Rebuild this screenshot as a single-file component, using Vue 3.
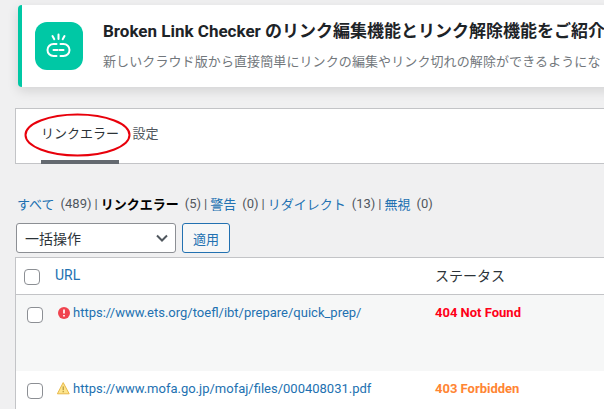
<script setup>
const filtres = [
  { nom: 'すべて', total: 489 },
  { nom: 'リンクエラー', total: 5, actif: true },
  { nom: '警告', total: 0 },
  { nom: 'リダイレクト', total: 13 },
  { nom: '無視', total: 0 }
];
const lignes = [
  { url: 'https://www.ets.org/toefl/ibt/prepare/quick_prep/', statut: '404 Not Found', type: 'erreur' },
  { url: 'https://www.mofa.go.jp/mofaj/files/000408031.pdf', statut: '403 Forbidden', type: 'alerte' }
];
</script>

<template>
  <div class="page">
    <div class="banniere">
      <div class="logo">
        <svg width="26" height="26" viewBox="0 0 26 26" fill="none" stroke="#fff" stroke-width="2" stroke-linecap="round">
          <path d="M10.5 11H7.5a6 6 0 0 0 0 12h3" />
          <path d="M14.5 11h3a6 6 0 0 1 0 12h-3" />
          <path d="M7.5 17h4M13.5 17h4" />
          <path d="M12.5 1.5v4.5M6.5 3l1.8 3.2M18.5 3l-1.8 3.2" />
        </svg>
      </div>
      <div class="banniere-texte">
        <div class="titre">Broken Link Checker のリンク編集機能とリンク解除機能をご紹介</div>
        <div class="sous-titre">新しいクラウド版から直接簡単にリンクの編集やリンク切れの解除ができるようにな</div>
      </div>
    </div>

    <div class="onglets">
      <div class="onglet actif">リンクエラー</div>
      <div class="onglet second">設定</div>
      <svg class="ellipse" width="109" height="46" viewBox="0 0 109 46">
        <ellipse cx="54.5" cy="23" rx="52" ry="20.5" fill="none" stroke="#e8000b" stroke-width="2" />
      </svg>
    </div>

    <div class="filtres">
      <template v-for="(f, i) in filtres" :key="f.nom">
        <span v-if="i > 0" class="sep">|</span>
        <span :class="f.actif ? 'filtre-actif' : 'filtre'">{{ f.nom }}</span>
        <span class="total">({{ f.total }})</span>
      </template>
    </div>

    <div class="actions">
      <div class="select">
        <span>一括操作</span>
        <svg width="14" height="14" viewBox="0 0 14 14" fill="none" stroke="#50575e" stroke-width="2">
          <path d="M2 4.5l5 5 5-5" />
        </svg>
      </div>
      <button class="bouton">適用</button>
    </div>

    <div class="tableau">
      <div class="entete">
        <span class="case"></span>
        <span class="col-url lien-entete">URL</span>
        <span class="col-statut">ステータス</span>
      </div>
      <div v-for="l in lignes" :key="l.url" class="ligne" :class="l.type">
        <span class="case"></span>
        <div class="col-url url">
          <svg v-if="l.type === 'erreur'" width="13" height="13" viewBox="0 0 13 13">
            <circle cx="7" cy="7" r="6" fill="#f0444f" />
            <path d="M7 3.4v4.2M7 8.9v1.5" stroke="#fff" stroke-width="1.7" />
          </svg>
          <svg v-else width="13" height="13" viewBox="0 0 13 13">
            <path d="M6.2 .6L12.2 11.8H.4z" fill="#fde58c" stroke="#e8b84a" stroke-width="1" stroke-linejoin="round" />
            <path d="M6.2 4.4v3.8M6.2 9v1.3" stroke="#a8862a" stroke-width="1" />
          </svg>
          <a>{{ l.url }}</a>
        </div>
        <span class="col-statut code">{{ l.statut }}</span>
      </div>
    </div>
  </div>
</template>

<style>
html, body {
  margin: 0;
  background: #f0f0f1;
  overflow: hidden;
}
</style>

<style scoped>
.page {
  width: 604px;
  height: 409px;
  overflow: hidden;
  padding: 5px 0 0 15px;
  box-sizing: border-box;
  font-family: Roboto, "Noto Sans CJK JP", sans-serif;
  font-size: 13px;
  color: #2c3338;
}

.banniere {
  display: flex;
  align-items: center;
  width: 700px;
  height: 82px;
  margin-left: 3px;
  box-sizing: border-box;
  padding-left: 13px;
  background: #fff;
  border-left: 4px solid #00c8a5;
  border-radius: 4px;
  box-shadow: 0 4px 12px rgba(0, 0, 0, 0.12);
}

.logo {
  display: flex;
  align-items: center;
  justify-content: center;
  flex: none;
  width: 48px;
  height: 48px;
  background: #00c8a5;
  border-radius: 12px;
}

.banniere-texte {
  margin-left: 20px;
  white-space: nowrap;
}

.titre {
  font-size: 17px;
  font-weight: 700;
  line-height: 22px;
  color: #1d2327;
}

.sous-titre {
  margin-top: 10px;
  font-size: 13px;
  letter-spacing: 0.1px;
  line-height: 20px;
  color: #72777c;
}

.onglets {
  position: relative;
  display: flex;
  gap: 13.5px;
  width: 700px;
  height: 56px;
  margin-top: 21px;
  padding-left: 25px;
  box-sizing: border-box;
  background: #fff;
  border: 1px solid #c3c4c7;
}

.onglet {
  height: 55px;
  box-sizing: border-box;
  padding-top: 15px;
  line-height: 20px;
}

.onglet.second {
  color: #50575e;
}

.onglet.actif {
  border-bottom: 4px solid #646970;
}

.ellipse {
  position: absolute;
  left: 7px;
  top: 3px;
}

.filtres {
  display: flex;
  align-items: center;
  height: 20px;
  margin: 29px 0 0 2px;
  white-space: nowrap;
  color: #2271b1;
}

.filtre-actif {
  font-weight: 700;
  color: #000;
}

.total {
  margin-left: 6px;
  color: #50575e;
}

.sep {
  margin: 0 3px;
  color: #50575e;
}

.actions {
  display: flex;
  gap: 6px;
  margin: 10px 0 0 1px;
}

.select {
  display: flex;
  align-items: center;
  justify-content: space-between;
  width: 160px;
  height: 30px;
  box-sizing: border-box;
  padding: 0 6px 0 8px;
  font-size: 14px;
  background: #fff;
  border: 1px solid #8c8f94;
  border-radius: 3px;
}

.bouton {
  width: 48px;
  height: 30px;
  padding: 0;
  font: inherit;
  color: #2271b1;
  background: #f6f7f7;
  border: 1px solid #2271b1;
  border-radius: 3px;
}

.tableau {
  width: 700px;
  margin-top: 4px;
  background: #fff;
  border: 1px solid #c3c4c7;
}

.entete {
  display: flex;
  align-items: center;
  height: 36px;
  font-size: 14px;
  border-bottom: 1px solid #c3c4c7;
}

.ligne {
  display: flex;
  align-items: flex-start;
  padding-top: 10px;
  box-sizing: border-box;
}

.ligne.erreur {
  height: 76px;
  background: #f6f7f7;
}

.ligne.alerte {
  height: 60px;
}

.case {
  flex: none;
  width: 16px;
  height: 16px;
  box-sizing: border-box;
  margin: 2px 0 0 11px;
  background: #fff;
  border: 1px solid #8c8f94;
  border-radius: 4px;
}

.entete .case {
  margin: 2px 0 0 8px;
}

.col-url {
  flex: none;
  width: 378px;
  margin-left: 14px;
}

.entete .col-url {
  width: 380px;
  margin: -2px 0 0 15px;
}

.entete .col-statut {
  margin-top: -2px;
}

.lien-entete {
  color: #2271b1;
}

.url {
  display: flex;
  align-items: center;
  gap: 3px;
  height: 15px;
  font-size: 13px;
  white-space: nowrap;
  color: #2271b1;
}

.col-statut {
  white-space: nowrap;
}

.code {
  font-size: 13px;
  font-weight: 700;
  line-height: 15px;
}

.erreur .code {
  color: #ff0018;
}

.alerte .code {
  color: #ff8533;
}
</style>
